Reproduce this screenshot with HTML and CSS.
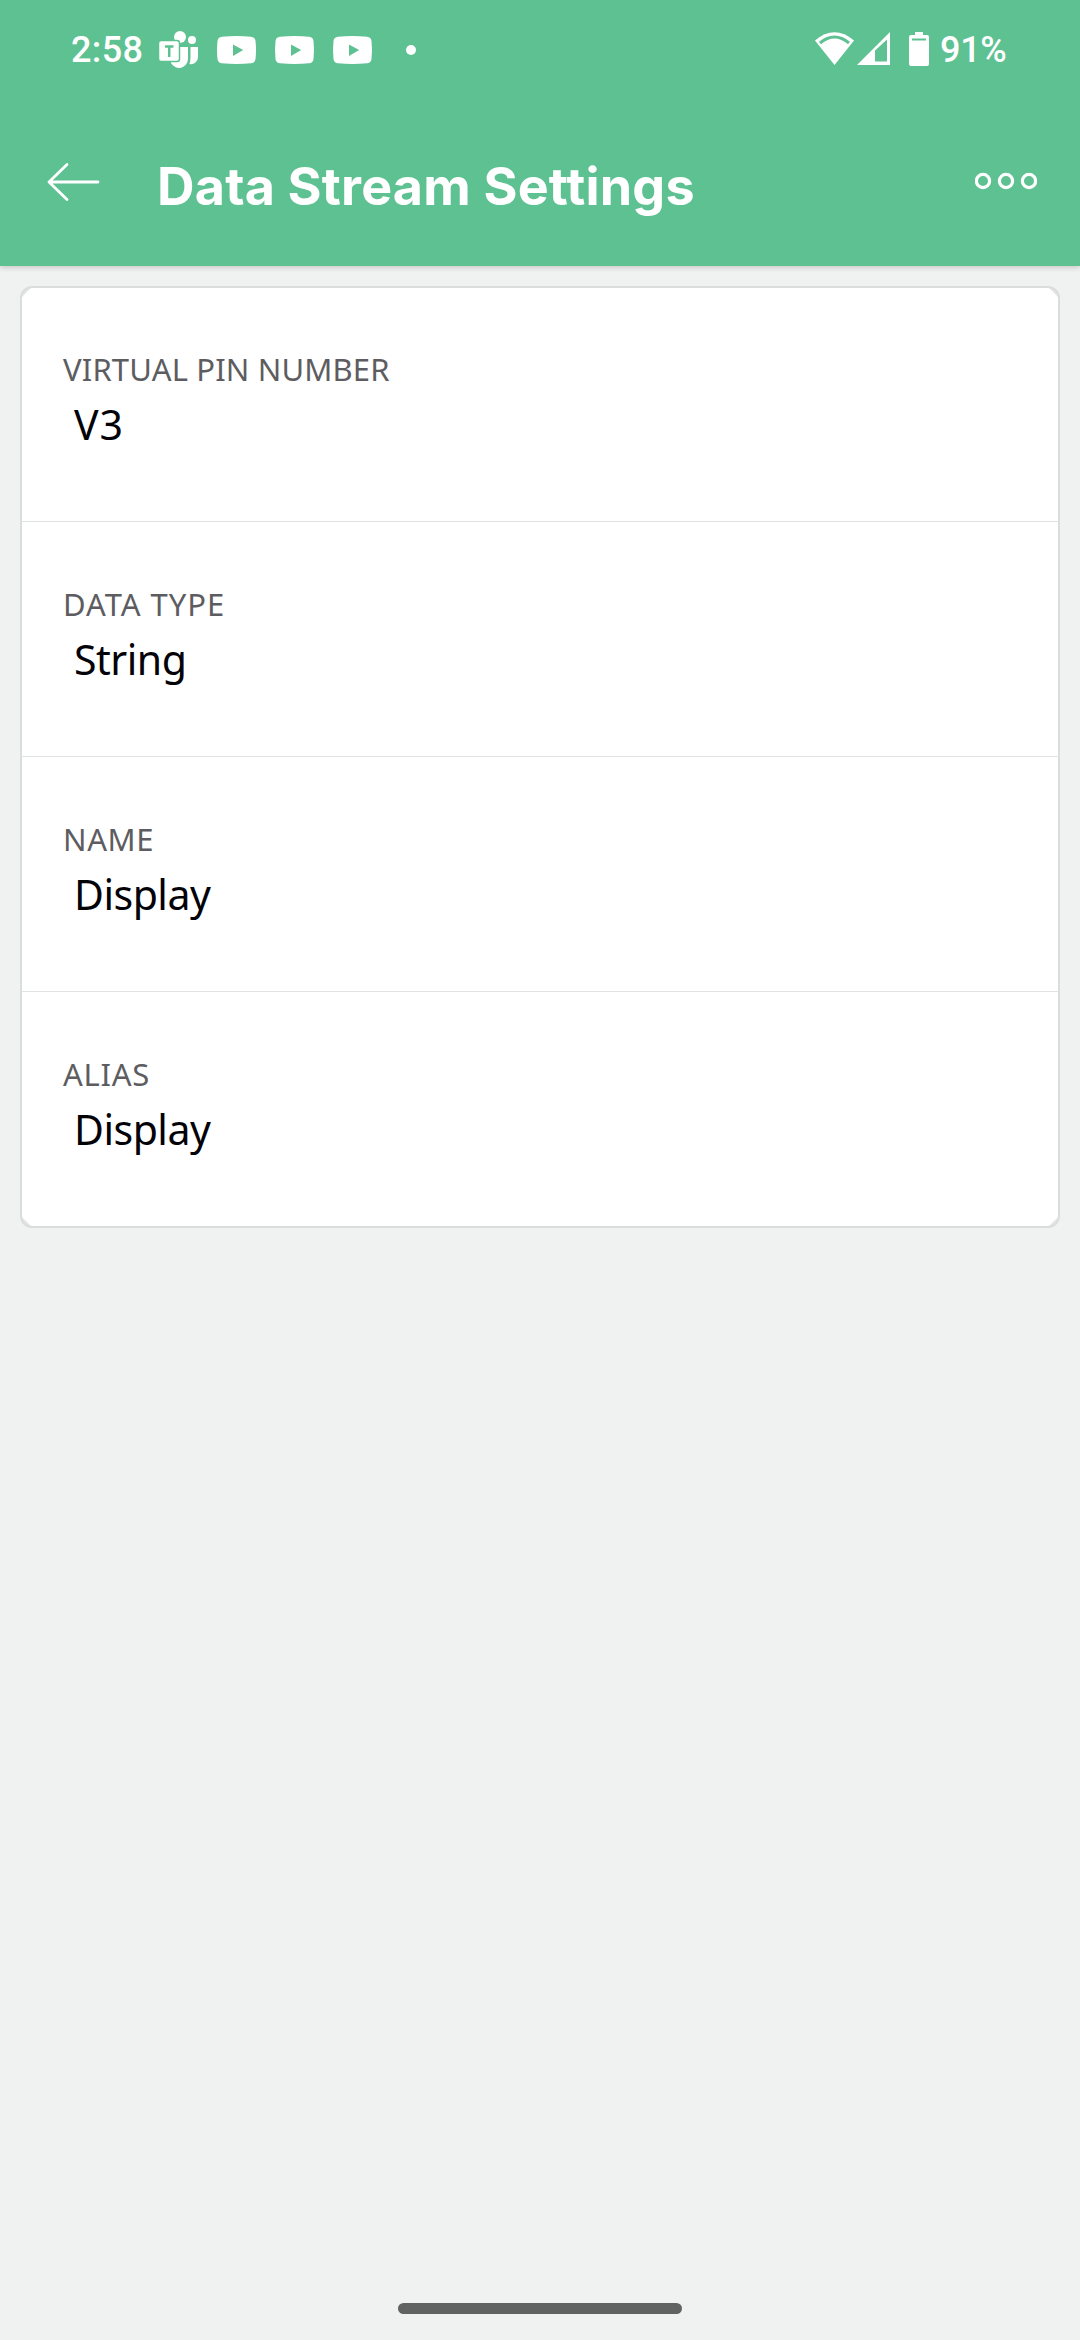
FILE: index.html
```html
<!DOCTYPE html>
<html lang="en">
<head>
<meta charset="utf-8">
<title>Data Stream Settings</title>
<link rel="stylesheet" href="styles.css">
</head>
<body>
<div class="screen">
  <header class="header">
    <div class="status">
      <div class="status-left">
        <span class="clock">2:58</span>
        <svg class="teams" viewBox="0 0 40 38" width="40" height="38">
          <circle cx="21" cy="6" r="6"/><circle cx="33" cy="9" r="4"/>
          <path d="M12 16H29V28a9 9 0 0 1-17 4Z"/>
          <path d="M31.500 16H39V26a7 7 0 0 1-8.500 7Q31.500 30 31.500 26Z"/>
          <rect class="badge" x="-.5" y="9.500" width="21" height="21" rx="2.500"/>
          <path class="cut" d="M6 15.500H14.500M10.200 15V26"/>
        </svg>
        <svg class="tube" viewBox="0 0 39 28" width="39" height="28"><path d="M5 .7Q19.500-.7 34 .7Q38 1 38.500 5Q39.500 14 38.500 23Q38 27 34 27.300Q19.500 28.700 5 27.300Q1 27 .5 23Q-.5 14 .5 5Q1 1 5 .7Z"/><path class="play" d="M16 8.500L26.200 14L16 20Z"/></svg>
        <svg class="tube" viewBox="0 0 39 28" width="39" height="28"><path d="M5 .7Q19.500-.7 34 .7Q38 1 38.500 5Q39.500 14 38.500 23Q38 27 34 27.300Q19.500 28.700 5 27.300Q1 27 .5 23Q-.5 14 .5 5Q1 1 5 .7Z"/><path class="play" d="M16 8.500L26.200 14L16 20Z"/></svg>
        <svg class="tube" viewBox="0 0 39 28" width="39" height="28"><path d="M5 .7Q19.500-.7 34 .7Q38 1 38.500 5Q39.500 14 38.500 23Q38 27 34 27.300Q19.500 28.700 5 27.300Q1 27 .5 23Q-.5 14 .5 5Q1 1 5 .7Z"/><path class="play" d="M16 8.500L26.200 14L16 20Z"/></svg>
        <span class="more-dot"></span>
      </div>
      <div class="status-right">
        <svg class="wifi" viewBox="0 0 39 33" width="39" height="33"><path d="M0 8.500Q19.500-8 39 8.500L19.500 33Z"/><path class="wifi-gap" d="M5 11Q19.500-1 34 11"/></svg>
        <svg class="signal" viewBox="0 0 33 33" width="33" height="33"><path fill-rule="evenodd" d="M33 0V33H0ZM30 7.500L18 18.500V29.500H30Z"/></svg>
        <svg class="battery" viewBox="0 0 20 34" width="20" height="34"><path d="M6 0H14V3H18Q20 3 20 5V32Q20 34 18 34H2Q0 34 0 32V5Q0 3 2 3H6Z"/><path class="level" d="M3 7.500H17"/></svg>
        <span class="percent">91%</span>
      </div>
    </div>
    <div class="toolbar">
      <svg class="back" viewBox="0 0 54 40" width="54" height="40"><path d="M20 2.500L2 20L20 37.500M2 20H51"/></svg>
      <h1 class="title">Data Stream Settings</h1>
      <svg class="menu" viewBox="0 0 62 18" width="62" height="18"><circle cx="8" cy="9" r="6.600"/><circle cx="31" cy="9" r="6.600"/><circle cx="54" cy="9" r="6.600"/></svg>
    </div>
  </header>
  <main class="content">
    <section class="card">
      <div class="rows">
        <div class="row"><div class="label pin">VIRTUAL PIN NUMBER</div><div class="value v3">V3</div></div>
        <div class="row"><div class="label type">DATA TYPE</div><div class="value string">String</div></div>
        <div class="row"><div class="label name">NAME</div><div class="value">Display</div></div>
        <div class="row"><div class="label alias">ALIAS</div><div class="value">Display</div></div>
      </div>
    </section>
  </main>
  <footer class="nav"><div class="handle"></div></footer>
</div>
</body>
</html>
```

FILE: styles.css
```css
* { box-sizing: border-box; }
body { margin: 0; background: #f0f2f1; font-family: "Noto Sans", sans-serif; }
.screen { width: 1080px; height: 2340px; display: flex; flex-direction: column; }
.header { height: 266px; flex: none; background: #5ec192; color: #fff; box-shadow: 0 1px 6px rgba(0,0,0,.2); }
.status { height: 100px; display: flex; justify-content: space-between; padding: 0 75px 0 71px; font: 500 36px/100px Roboto, sans-serif; }
.status-left, .status-right { display: flex; align-items: center; }
.status svg { fill: #fff; flex: none; overflow: visible; }
.clock { width: 88px; margin-top: -1px; letter-spacing: .4px; }
.percent { width: 65px; margin: -1px 0 0 11px; white-space: nowrap; letter-spacing: -.3px; }
.tube { margin-left: 19px; }
.teams + .tube { margin-left: 18px; }
.teams .badge { stroke: #5ec192; stroke-width: 1.5px; }
.teams .cut { fill: none; stroke: #5ec192; stroke-width: 2.5px; }
.status .play { fill: #5ec192; }
.more-dot { width: 10px; height: 10px; border-radius: 50%; background: #fff; margin-left: 34px; }
.wifi { margin-top: -3px; }
.status .wifi-gap { fill: none; stroke: #5ec192; stroke-width: 3px; }
.signal { margin: -3px 0 0 3px; }
.battery { margin: -2px 0 0 19px; }
.level { stroke: #5ec192; stroke-width: 2px; }
.toolbar { height: 166px; display: flex; align-items: flex-start; padding: 0 43px 0 47px; }
.back { margin-top: 62px; fill: none; stroke: #fff; stroke-width: 2.8px; stroke-linecap: round; stroke-linejoin: round; }
.title { margin: 55px 0 0 56px; font: 700 52px/64px Inter, sans-serif; letter-spacing: .2px; white-space: nowrap; }
.menu { margin: 72px 0 0 auto; fill: none; stroke: #fff; stroke-width: 3.2px; }
.content { flex: 1; padding: 20px; }
.card { height: 942px; border: 2px solid #dadddc; border-radius: 12px; background: #e4e6e5; overflow: hidden; }
/* bevelled inner corners inside the rounded frame */
.rows { height: 100%; background: #fff; clip-path: polygon(9px 0, calc(100% - 9px) 0, 100% 9px, 100% calc(100% - 9px), calc(100% - 9px) 100%, 9px 100%, 0 calc(100% - 9px), 0 9px); }
.row { height: 235px; padding: 62px 41px 0; border-bottom: 1px solid #e1e3e2; }
.row:first-child { height: 234px; padding-top: 61px; }
.row:last-child { border-bottom: 0; }
.label { font-size: 31px; line-height: 40px; color: #5d5d61; white-space: nowrap; }
.value { margin: 8px 0 0 11px; font-size: 41px; line-height: 54px; color: #020207; letter-spacing: -.5px; }
.pin { letter-spacing: .15px; }
.type { letter-spacing: 1px; }
.name { letter-spacing: .6px; }
.alias { letter-spacing: .7px; }
.v3 { letter-spacing: 1px; }
.nav { height: 60px; flex: none; display: flex; justify-content: center; padding-top: 23px; }
.handle { width: 284px; height: 11px; border-radius: 6px; background: #606362; }
```
